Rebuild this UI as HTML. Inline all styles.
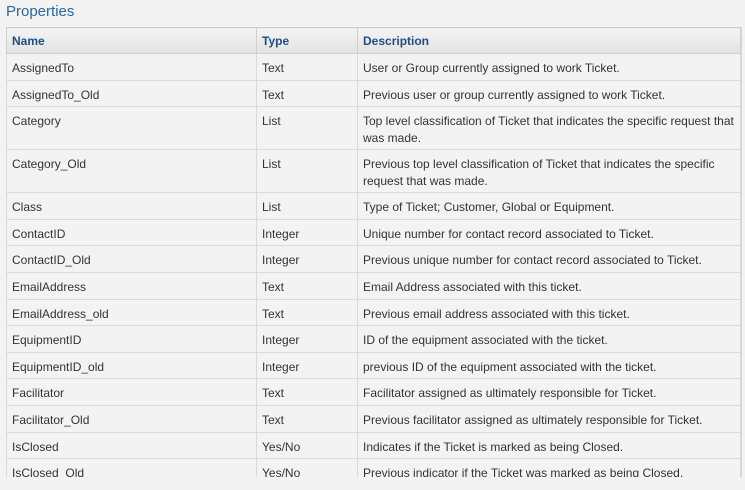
<!DOCTYPE html>
<html><head><meta charset="utf-8"><style>
html,body{margin:0;padding:0;background:#f3f3f3;width:745px;height:490px;overflow:hidden}
body{font-family:"Liberation Sans",sans-serif;font-size:12px;color:#333}
h2{position:absolute;left:6px;top:3px;margin:0;font-weight:normal;font-size:15px;color:#2867a3}
.wrap{position:absolute;left:6px;top:27px;width:735px;height:450px;overflow:hidden;border-right:1px solid #d6d6d6}
table{border-collapse:collapse;width:735px;table-layout:fixed}
th,td{border:1px solid #d9d9d9;text-align:left;vertical-align:top;padding:0 5px}
th{height:25px;vertical-align:middle;background:linear-gradient(#f4f4f4,#e2e2e2);color:#1d4f82;font-weight:bold;border-color:#cfcfcf}
td{padding-top:6px;height:19.6px;line-height:17px;box-sizing:content-box}
td.two{height:36px}
</style></head><body>
<h2>Properties</h2>
<div class="wrap"><table>
<colgroup><col style="width:250px"><col style="width:101px"><col></colgroup>
<tr><th>Name</th><th>Type</th><th>Description</th></tr>
<tr><td>AssignedTo</td><td>Text</td><td>User or Group currently assigned to work Ticket.</td></tr>
<tr><td>AssignedTo_Old</td><td>Text</td><td>Previous user or group currently assigned to work Ticket.</td></tr>
<tr><td class="two">Category</td><td>List</td><td>Top level classification of Ticket that indicates the specific request that was made.</td></tr>
<tr><td class="two">Category_Old</td><td>List</td><td>Previous top level classification of Ticket that indicates the specific request that was made.</td></tr>
<tr><td>Class</td><td>List</td><td>Type of Ticket; Customer, Global or Equipment.</td></tr>
<tr><td>ContactID</td><td>Integer</td><td>Unique number for contact record associated to Ticket.</td></tr>
<tr><td>ContactID_Old</td><td>Integer</td><td>Previous unique number for contact record associated to Ticket.</td></tr>
<tr><td>EmailAddress</td><td>Text</td><td>Email Address associated with this ticket.</td></tr>
<tr><td>EmailAddress_old</td><td>Text</td><td>Previous email address associated with this ticket.</td></tr>
<tr><td>EquipmentID</td><td>Integer</td><td>ID of the equipment associated with the ticket.</td></tr>
<tr><td>EquipmentID_old</td><td>Integer</td><td>previous ID of the equipment associated with the ticket.</td></tr>
<tr><td>Facilitator</td><td>Text</td><td>Facilitator assigned as ultimately responsible for Ticket.</td></tr>
<tr><td>Facilitator_Old</td><td>Text</td><td>Previous facilitator assigned as ultimately responsible for Ticket.</td></tr>
<tr><td>IsClosed</td><td>Yes/No</td><td>Indicates if the Ticket is marked as being Closed.</td></tr>
<tr><td>IsClosed_Old</td><td>Yes/No</td><td>Previous indicator if the Ticket was marked as being Closed.</td></tr>
</table></div>
</body></html>
